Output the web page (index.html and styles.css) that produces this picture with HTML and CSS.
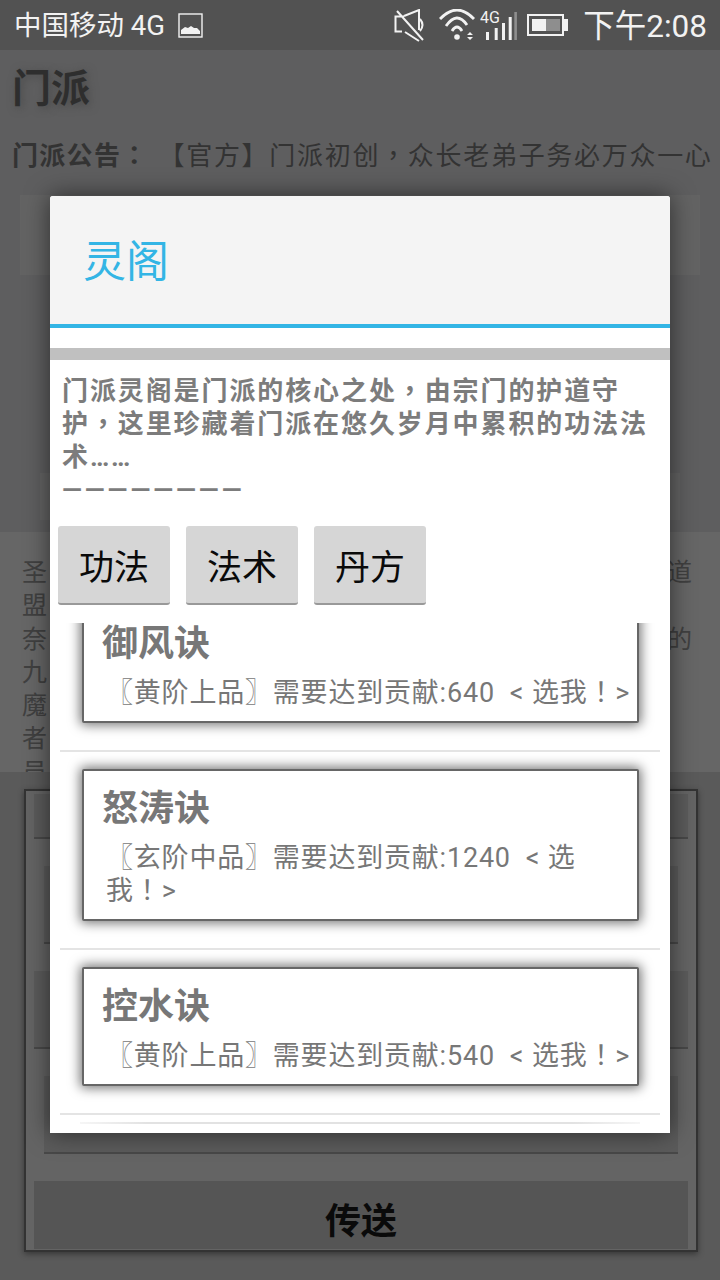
FILE: index.html
```html
<!DOCTYPE html>
<html lang="zh-CN">
  <head>
    <meta charset="UTF-8" />
    <meta name="viewport" content="width=device-width, initial-scale=1.0" />
    <title>门派</title>
    <link rel="stylesheet" href="styles.css">
  </head>
  <body>
    <div class="status-bar">
      <div class="status-left">
        <span class="status-text">中国移动 4G</span>
        <svg class="icon-picture" width="25" height="25" viewBox="0 0 25 25">
          <rect x="1" y="1" width="23" height="23" fill="none" stroke="#f2f2f2" stroke-width="1.4" />
          <path d="M3 21V17L7 14L10 15L13 13L16 15L19 15L22 18V21Z" fill="#f2f2f2" />
        </svg>
      </div>
      <div class="status-right">
        <svg class="icon-mute" width="31" height="33" viewBox="0 0 31 33">
          <path d="M10 7.5H1.5V22.5H8M10 7L25 1V21M11 23L25 32M26 10Q31 16 26 22M3 2L29 31" fill="none" stroke="#f2f2f2" stroke-width="2" />
        </svg>
        <svg class="icon-wifi" width="37" height="32" viewBox="0 0 37 32">
          <path d="M1 10Q18 -8 35 10M7 17Q18 1.5 28 16M13 22Q18 14 23 22" fill="none" stroke="#f2f2f2" stroke-width="2.8" />
          <circle cx="18" cy="28" r="2.8" fill="#f2f2f2" />
          <path d="M28 26L31 23L34 26ZM28 28L31 31L34 28Z" fill="#f2f2f2" />
        </svg>
        <svg class="icon-signal" width="38" height="32" viewBox="0 0 38 32">
          <text x="0" y="14" class="signal-label">4G</text>
          <rect x="6" y="23" width="3" height="8" fill="#f2f2f2" />
          <rect x="14.7" y="19" width="3" height="12" fill="#f2f2f2" />
          <rect x="22" y="14" width="3" height="17" fill="#f2f2f2" />
          <rect x="28.7" y="8" width="3" height="23" fill="#f2f2f2" />
          <rect x="34.3" y="3" width="2.6" height="28" fill="#8e8e8e" />
        </svg>
        <svg class="icon-battery" width="41" height="22" viewBox="0 0 41 22">
          <rect x="1" y="1" width="35" height="20" fill="none" stroke="#f2f2f2" stroke-width="2" />
          <rect x="5" y="5" width="14" height="12" fill="#f2f2f2" />
          <rect x="19" y="5" width="14" height="12" fill="#8e8e8e" />
          <rect x="37" y="5" width="4" height="12" fill="#f2f2f2" />
        </svg>
        <span class="status-time">下午2:08</span>
      </div>
    </div>

    <div class="page-top">
      <h1 class="page-title">门派</h1>
      <p class="notice"><b class="notice-label">门派公告<span class="punct" lang="zh-TW">：</span></b>【官方】门派初创<span class="punct" lang="zh-TW">，</span>众长老弟子务必万众一心</p>
      <div class="top-block"></div>
      <div class="top-block-small"></div>
    </div>

    <div class="page-middle">
      <div class="story-row"><span>圣</span><span>道</span></div>
      <div class="story-row"><span>盟</span></div>
      <div class="story-row"><span>奈</span><span>的</span></div>
      <div class="story-row"><span>九</span></div>
      <div class="story-row"><span>魔</span></div>
      <div class="story-row"><span>者</span></div>
      <div class="story-row"><span>员</span></div>
    </div>

    <div class="page-bottom">
      <div class="teleport-panel">
        <div class="panel-row panel-row-first"></div>
        <div class="panel-row panel-row-inset"></div>
        <div class="panel-row"></div>
        <div class="panel-row panel-row-inset"></div>
        <button class="teleport-button">传送</button>
      </div>
    </div>

    <div class="dialog">
      <div class="dialog-header">灵阁</div>
      <div class="dialog-line"></div>
      <div class="dialog-band"></div>
      <p class="dialog-text">门派灵阁是门派的核心之处<span class="punct" lang="zh-TW">，</span>由宗门的护道守护<span class="punct" lang="zh-TW">，</span>这里珍藏着门派在悠久岁月中累积的功法法术……<br><span class="dialog-dashes">————————</span></p>
      <div class="tabs">
        <button class="tab">功法</button>
        <button class="tab">法术</button>
        <button class="tab">丹方</button>
      </div>
      <div class="skill-list">
        <div class="skill-item">
          <div class="skill-card">
            <div class="skill-name">御风诀</div>
            <div class="skill-info">〖黄阶上品〗需要达到贡献:640&nbsp; &lt; 选我<span class="punct" lang="zh-TW">！</span>&gt;</div>
          </div>
        </div>
        <div class="skill-item">
          <div class="skill-card">
            <div class="skill-name">怒涛诀</div>
            <div class="skill-info">〖玄阶中品〗需要达到贡献:1240&nbsp; &lt; 选<br>我<span class="punct" lang="zh-TW">！</span>&gt;</div>
          </div>
        </div>
        <div class="skill-item">
          <div class="skill-card">
            <div class="skill-name">控水诀</div>
            <div class="skill-info">〖黄阶上品〗需要达到贡献:540&nbsp; &lt; 选我<span class="punct" lang="zh-TW">！</span>&gt;</div>
          </div>
        </div>
        <div class="skill-stub"></div>
      </div>
    </div>
  </body>
</html>
```

FILE: styles.css
```css
* {
  box-sizing: border-box;
}
html, body {
  margin: 0;
  padding: 0;
}
body {
  width: 720px;
  height: 1280px;
  overflow: hidden;
  position: relative;
  font-family: Roboto, "Noto Sans CJK SC", sans-serif;
  background-color: #5a5a5a;
}
.punct {
  font-family: "Noto Sans CJK TC", sans-serif;
  line-height: 0;
}

/* status bar */
.status-bar {
  height: 50px;
  padding: 0 13px 0 14px;
  display: flex;
  justify-content: space-between;
  align-items: center;
  background-color: #525252;
  color: #f2f2f2;
}
.status-left {
  display: flex;
  align-items: center;
  gap: 13px;
}
.status-text {
  padding-bottom: 4px;
  font-size: 27.5px;
}
.status-right {
  display: flex;
  align-items: center;
}
.status-right svg {
  display: block;
}
.icon-wifi {
  margin-left: 14px;
}
.icon-signal {
  margin-left: 4px;
}
.icon-battery {
  margin-left: 9px;
}
.signal-label {
  font-family: Roboto, sans-serif;
  font-size: 16px;
  fill: #f2f2f2;
}
.status-time {
  margin-left: 15px;
  padding-bottom: 4px;
  font-size: 31.5px;
}

/* dimmed page behind the dialog */
.page-top {
  height: 482px;
  padding-top: 16px;
  background-color: #5e5e5f;
}
.page-title {
  margin: 0 0 0 12px;
  font-size: 39px;
  line-height: 46px;
  color: #2e2e2e;
  text-shadow: 2px 2px 8px #4a4a4a;
}
.notice {
  margin: 25px 0 0 12px;
  font-size: 26px;
  line-height: 38px;
  letter-spacing: 1.7px;
  white-space: nowrap;
  color: #333;
}
.notice-label {
  margin-right: 23px;
  letter-spacing: 1.3px;
}
.top-block {
  height: 80px;
  margin: 20px 20px 0;
  background-color: #636363;
}
.top-block-small {
  height: 47px;
  margin: 198px 40px 0;
  background-color: #636363;
}
.page-middle {
  height: 240px;
  padding: 24px 28px 0 22px;
  background-color: #666;
  color: #404040;
  font-size: 25px;
  overflow: hidden;
}
.story-row {
  height: 33.3px;
  line-height: 33.3px;
  display: flex;
  justify-content: space-between;
}
.page-bottom {
  padding: 17px 22px 0 24px;
}
.teleport-panel {
  height: 463px;
  padding: 3px 8px 0;
  display: flex;
  flex-direction: column;
  gap: 27px;
  background-color: #646464;
  border: 2px solid #333;
  box-shadow: 0 2px 6px rgba(0, 0, 0, 0.4);
}
.panel-row {
  height: 78px;
  background-color: #5b5b5b;
  border-bottom: 2px solid #484848;
}
.panel-row-first {
  height: 45px;
}
.panel-row-inset {
  margin: 0 10px;
}
.teleport-button {
  height: 68px;
  padding: 6px 0 0;
  flex: none;
  border: none;
  background-color: #555;
  color: #0a0a0a;
  font-family: inherit;
  font-size: 36px;
  font-weight: bold;
}

/* dialog */
.dialog {
  position: absolute;
  left: 50px;
  top: 196px;
  width: 620px;
  height: 937px;
  display: flex;
  flex-direction: column;
  background-color: #fff;
  border-radius: 3px 3px 0 0;
  box-shadow: 0 0 24px rgba(0, 0, 0, 0.55);
}
.dialog-header {
  height: 128px;
  padding-left: 33px;
  line-height: 132px;
  flex: none;
  font-size: 43px;
  color: #33b5e5;
  background-color: #f4f4f4;
  border-radius: 3px 3px 0 0;
}
.dialog-line {
  height: 4px;
  flex: none;
  background-color: #33b5e5;
}
.dialog-band {
  height: 12px;
  margin-top: 20px;
  flex: none;
  background-color: #c0c0c0;
}
.dialog-text {
  height: 166px;
  margin: 0;
  padding: 15px 10px 0 12px;
  flex: none;
  font-size: 26px;
  font-weight: bold;
  line-height: 33px;
  letter-spacing: 1.9px;
  color: #7c7c7c;
}
.dialog-dashes {
  letter-spacing: 3px;
}
.tabs {
  height: 97px;
  padding-left: 8px;
  flex: none;
  display: flex;
  gap: 16px;
}
.tab {
  width: 112px;
  height: 79px;
  padding: 0;
  border: none;
  border-bottom: 2px solid #999;
  border-radius: 3px;
  background-color: #d6d6d6;
  color: #0a0a0a;
  font-family: inherit;
  font-size: 35px;
}
.skill-list {
  flex: 1;
  min-height: 0;
  overflow: hidden;
}
.skill-item {
  margin: 0 10px;
  padding: 17px 21px 27px 22px;
  border-bottom: 2px solid #e4e4e4;
}
.skill-item:first-child {
  margin-top: -36px;
}
.skill-card {
  padding: 16px 4px 11px 18px;
  background-color: #fff;
  border: 2px solid #666;
  border-radius: 2px;
  box-shadow: 0 0 12px 2px rgba(0, 0, 0, 0.55);
}
.skill-name {
  margin-bottom: 11px;
  font-size: 36px;
  font-weight: bold;
  line-height: 44px;
  color: #777;
}
.skill-info {
  padding-left: 4px;
  font-size: 27px;
  line-height: 33px;
  letter-spacing: 0.8px;
  color: #777;
}
.skill-stub {
  height: 2px;
  margin: 7px 30px 0;
  background: linear-gradient(90deg, #f6f6f6, #e2e2e2 12%, #e2e2e2 88%, #f6f6f6);
}
```
